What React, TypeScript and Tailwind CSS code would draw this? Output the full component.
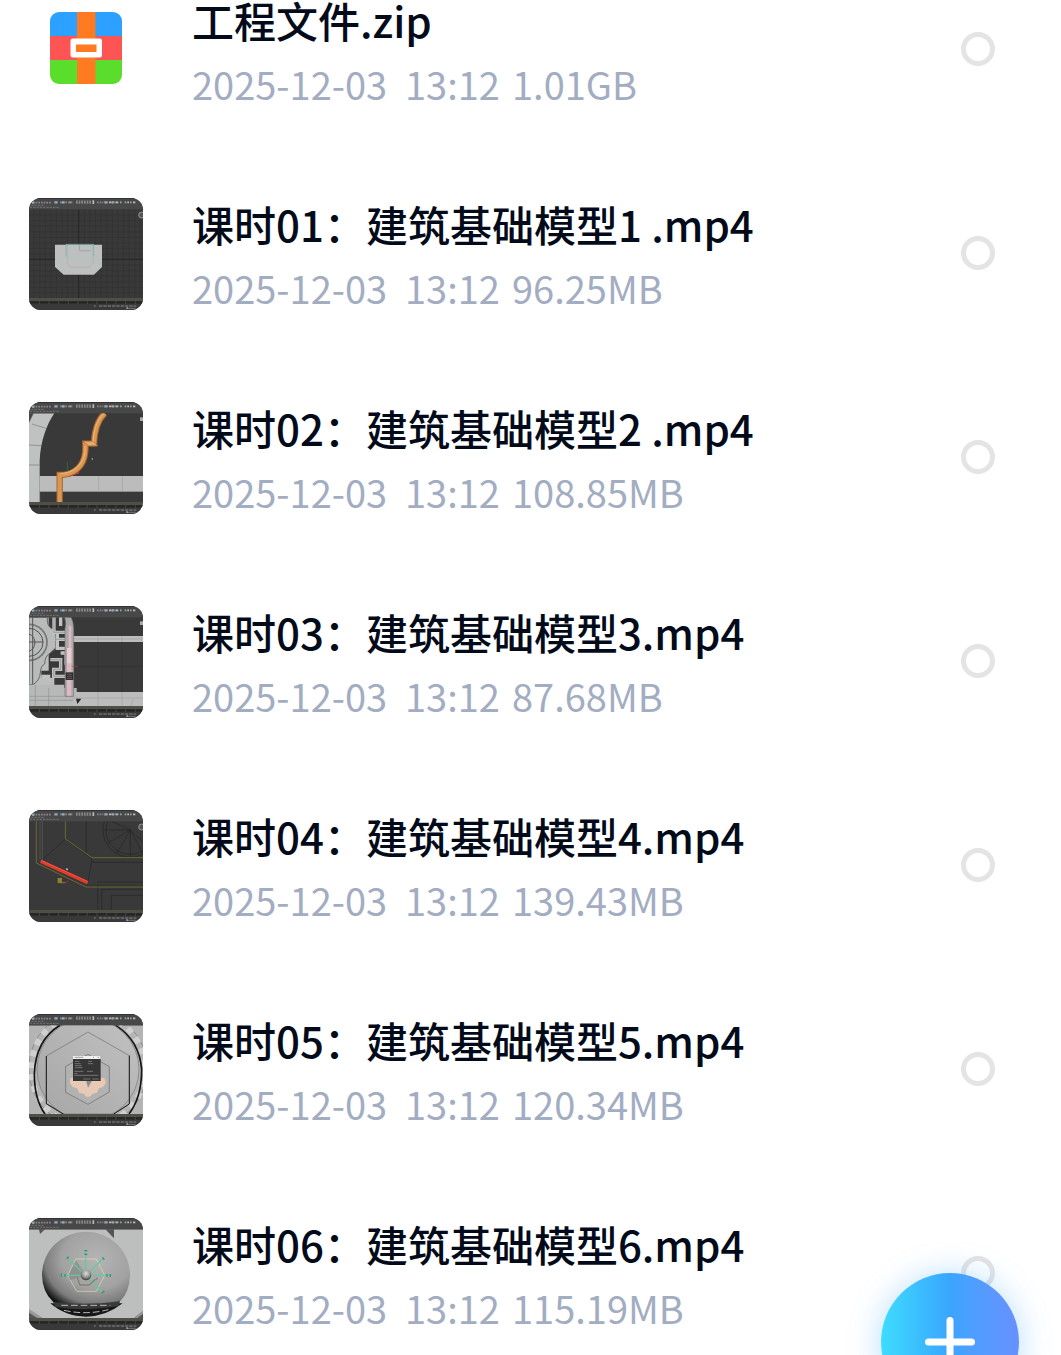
import React, { useState } from 'react';

type Scene = 'blockout' | 'trim' | 'lattice' | 'wireframe' | 'hexagon' | 'sphere';

interface FileItem {
  id: number;
  name: string;
  date: string;
  time: string;
  size: string;
  scene?: Scene;
}

const FILES: FileItem[] = [
  { id: 0, name: '工程文件.zip', date: '2025-12-03', time: '13:12', size: '1.01GB' },
  { id: 1, name: '课时01：建筑基础模型1 .mp4', date: '2025-12-03', time: '13:12', size: '96.25MB', scene: 'blockout' },
  { id: 2, name: '课时02：建筑基础模型2 .mp4', date: '2025-12-03', time: '13:12', size: '108.85MB', scene: 'trim' },
  { id: 3, name: '课时03：建筑基础模型3.mp4', date: '2025-12-03', time: '13:12', size: '87.68MB', scene: 'lattice' },
  { id: 4, name: '课时04：建筑基础模型4.mp4', date: '2025-12-03', time: '13:12', size: '139.43MB', scene: 'wireframe' },
  { id: 5, name: '课时05：建筑基础模型5.mp4', date: '2025-12-03', time: '13:12', size: '120.34MB', scene: 'hexagon' },
  { id: 6, name: '课时06：建筑基础模型6.mp4', date: '2025-12-03', time: '13:12', size: '115.19MB', scene: 'sphere' },
];

const ZipIcon = () => (
  <svg viewBox="0 0 72 72" className="size-18" aria-hidden="true">
    <defs>
      <clipPath id="zipClip"><rect width="72" height="72" rx="9" /></clipPath>
    </defs>
    <g clipPath="url(#zipClip)">
      <rect width="72" height="24" fill="#2ca1ff" />
      <rect y="24" width="72" height="24" fill="#ff5454" />
      <rect y="48" width="72" height="24" fill="#5bdd2b" />
      <rect x="27" width="18.5" height="72" fill="#ff7a20" />
    </g>
    <rect x="20.5" y="26.5" width="31.5" height="19" rx="2.5" fill="#fff" />
    <rect x="26" y="32.5" width="20.5" height="7.5" fill="#ff7a20" />
  </svg>
);

const Blockout = () => (
  <g>
    <path d="M27 75H369M27 92H369M27 108H369M27 125H369M27 142H369M27 158H369M27 175H369M27 192H369M27 225H369M27 242H369M27 258H369M27 275H369M27 292H369M27 308H369" stroke="#313131" strokeWidth="1.5" />
    <path d="M42 58V324M59 58V324M76 58V324M93 58V324M109 58V324M126 58V324M142 58V324M159 58V324M193 58V324M210 58V324M226 58V324M243 58V324M260 58V324M277 58V324M293 58V324M310 58V324M327 58V324M344 58V324M360 58V324" stroke="#313131" strokeWidth="1.5" />
    <path d="M27 208H369M176 58V324" stroke="#222" strokeWidth="2.5" />
    <path d="M105 164H246V231L222 254H131L105 231Z" fill="#bebfbf" />
    <path d="M142 164V220L154 232H208L219 220V164" fill="none" stroke="#aaadad" strokeWidth="2" />
    <path d="M142 201H219" stroke="#a9c7c5" strokeWidth="2" />
    <path d="M138 200V163H221V198" fill="none" stroke="#79b5b4" strokeWidth="2.5" />
    <path d="M178 163V182H212" fill="none" stroke="#8d9898" strokeWidth="2" />
    <circle cx="365" cy="75" r="9" fill="#555" stroke="#bbb" strokeWidth="2" />
  </g>
);

const Trim = () => (
  <g>
    <path d="M27 58H103C80 92 62 140 59 200V324H27Z" fill="#c0c1c1" />
    <path d="M27 58H41L27 86Z" fill="#444" />
    <path d="M40 58L28 83M36 90L78 103M27 153L64 155M27 213H59" stroke="#737373" strokeWidth="1.8" fill="none" />
    <rect x="59" y="246" width="310" height="47" fill="#bcbcbc" />
    <path d="M59 293V324M236 246V293M307 246V293" stroke="#999" strokeWidth="1.5" />
    <path d="M254 58Q224 88 222 149H196Q200 207 164 231Q147 243 119 243V324" fill="none" stroke="#a9672e" strokeWidth="19" />
    <path d="M254 58Q224 88 222 149H196Q200 207 164 231Q147 243 119 243V324" fill="none" stroke="#d99752" strokeWidth="13" />
    <path d="M251 58Q221 88 219 147M195 157Q198 202 162 227Q146 238 122 239" fill="none" stroke="#e8b074" strokeWidth="4" />
    <path d="M188 142L206 155H233L218 142Z" fill="#e7ad70" stroke="#9c5e2b" strokeWidth="1.5" />
    <path d="M142 204V230" stroke="#327b35" strokeWidth="2" />
    <path d="M150 246L178 236" stroke="#c5482e" strokeWidth="3" />
    <circle cx="217" cy="195" r="2" fill="#ccc" />
    <rect x="360" y="70" width="9" height="11" fill="#aaa" />
  </g>
);

const Lattice = () => (
  <g>
    <rect x="27" y="58" width="120" height="266" fill="#bcbdbd" />
    <path d="M86 58H138V324H103V240H64V218H86Z" fill="#393939" />
    <path d="M27 58H82Q80 82 93 91L107 96V150L86 169Q75 176 74 198Q62 203 61 225Q59 248 39 260H27Z" fill="#b9baba" stroke="#686868" strokeWidth="3" />
    <path d="M27 79A54 54 0 0 1 27 187" fill="none" stroke="#777" strokeWidth="5" />
    <path d="M27 91A42 42 0 0 1 27 175" fill="none" stroke="#515151" strokeWidth="3" />
    <path d="M27 108A28 28 0 0 1 27 160M27 132H70M38 58V260" fill="none" stroke="#555" strokeWidth="3" />
    <path d="M102 58V103H136M122 58V84M106 124H138M112 102V151H138M91 185H122V214H101V235H138M64 235H86V249M122 165H138V200" fill="none" stroke="#c1c2c2" strokeWidth="10" />
    <path d="M102 58V103H136M106 124H138M91 185H122V214H101V235H138" fill="none" stroke="#777" strokeWidth="1.5" />
    <path d="M27 260H133V270H170V324H27Z" fill="#b7b8b8" />
    <path d="M27 295H165M46 260V324M86 270V324M27 307H160" stroke="#929292" strokeWidth="2" />
    <rect x="159" y="114" width="210" height="18" fill="#bdbdbd" />
    <rect x="159" y="282" width="210" height="42" fill="#bcbcbc" />
    <path d="M159 123H369M234 114V132M306 114V132M234 282V324M306 282V324M159 300H369M340 304L332 324" stroke="#999" strokeWidth="1.5" />
    <path d="M234 132V282M306 132V282M161 205H367" stroke="#303030" strokeWidth="2" />
    <path d="M134 58H153Q160 70 161 93V295H135V93Q140 76 134 58Z" fill="#aaa9a9" stroke="#777" strokeWidth="2" />
    <path d="M146 83H154V293H141V150H146Z" fill="#e0b9c0" />
    <path d="M141 150H154V196H141Z" fill="#edccd1" />
    <rect x="137" y="223" width="23" height="23" fill="#302d2e" />
    <path d="M141 229H156M141 235H156M141 241H156" stroke="#836d70" strokeWidth="2" />
    <path d="M155 205H174" stroke="#a94543" strokeWidth="2" />
    <path d="M168 302H184L172 318Z" fill="#262626" />
    <rect x="360" y="70" width="9" height="11" fill="#aaa" />
  </g>
);

const Wireframe = () => (
  <g>
    <g fill="none" stroke="#262626" strokeWidth="2">
      <circle cx="331" cy="84" r="82" />
      <circle cx="331" cy="84" r="73" />
      <path d="M331 84L249 84M331 84L260 125M331 84L290 155M331 84V166M331 84L369 156M331 84L369 119M331 84L276 58" />
      <path d="M136 112L67 174M136 112L216 171L204 240M199 58V154M216 181H369M232 240H369M233 324V248M245 324V262H369M274 324V280H369M200 252H369" />
    </g>
    <path d="M49 58V183L198 255H369" fill="none" stroke="#77752f" strokeWidth="2.5" />
    <path d="M136 58V111L216 167H369" fill="none" stroke="#77752f" strokeWidth="2.5" />
    <path d="M60 58V173M67 58V174" stroke="#696969" strokeWidth="1.5" />
    <path d="M62 178L203 242" stroke="#e43a2c" strokeWidth="10" />
    <path d="M63 175L203 238" stroke="#ff5d46" strokeWidth="2" />
    <rect x="113" y="228" width="13" height="13" fill="#8d812f" />
    <path d="M113 242H135" stroke="#aaa33c" strokeWidth="2" />
    <path d="M130 242Q143 243 145 237" fill="none" stroke="#b34336" strokeWidth="2" />
    <circle cx="141" cy="202" r="3" fill="#b9c2ca" />
    <circle cx="365" cy="75" r="9" fill="#555" stroke="#bbb" strokeWidth="2" />
  </g>
);

const Hexagon = () => (
  <g>
    <rect x="27" y="58" width="342" height="266" fill="#b4b4b4" />
    <circle cx="204" cy="188" r="178" fill="none" stroke="#8e8e8e" strokeWidth="3" />
    <circle cx="204" cy="190" r="171" fill="none" stroke="#d0d0d0" strokeWidth="18" strokeDasharray="18 18" />
    <path d="M120 58Q47 103 43 203Q43 280 75 324M287 58Q358 103 365 190Q365 275 327 324" fill="none" stroke="#151515" strokeWidth="5" />
    <circle cx="204" cy="190" r="153" fill="url(#discShade)" stroke="#777" strokeWidth="2" />
    <path d="M204 78L328 149V294L282 324H128L79 293V150Z" fill="none" stroke="#707070" strokeWidth="2" />
    <path d="M79 150V293L130 324M328 149V294L281 324" fill="none" stroke="#1c1c1c" strokeWidth="3" />
    <path d="M204 145L268 182V258L204 295L137 259V181Z" fill="#b2b2b2" stroke="#777" strokeWidth="2.5" />
    <path d="M151 216H253L258 229L249 243L237 247L231 260L218 263L210 272H199L191 263L177 260L172 247L158 243L150 232Z" fill="#e8c9b5" />
    <path d="M198 222L204 245L216 224Z" fill="#8d8d8d" />
    <rect x="159" y="150" width="83" height="75" fill="#363636" />
    <rect x="159" y="150" width="83" height="9" fill="#f0f0f0" />
    <path d="M164 154H190M219 154H222M233 154H237" stroke="#777" strokeWidth="2" />
    <path d="M165 166H178M165 173H182M165 179H185M165 185H187M204 166H216M204 173H219M163 196H190M201 196H219M163 203H173M163 208H235M190 219H211M217 219H236" stroke="#929292" strokeWidth="2" />
  </g>
);

const Sphere = () => (
  <g>
    <rect x="27" y="58" width="342" height="266" fill="#bdbebe" />
    <path d="M57 58H75L60 72ZM256 58H282V85ZM27 304L66 324H27ZM342 324L369 303V324Z" fill="#555" />
    <path d="M27 297L69 324H52L27 308ZM369 302L344 324H352L369 311Z" fill="#999" />
    <path d="M91 280Q137 320 198 320Q257 320 308 280Z" fill="#171717" />
    <path d="M66 194A132 129 0 0 1 330 194Q329 247 300 274Q290 291 267 287Q202 299 134 287Q111 292 99 275Q67 246 66 194Z" fill="url(#ballShade)" />
    <path d="M101 276Q194 288 300 274L296 288Q197 306 105 290Z" fill="#3a3a3a" />
    <path d="M124 286H271M132 301Q198 316 265 299" fill="none" stroke="#bbb" strokeWidth="3" strokeDasharray="20 9" />
    <path d="M168 147H229L254 196L229 244H170L143 196Z" fill="none" stroke="#e1ddb2" strokeWidth="2" />
    <path d="M168 150L197 196L150 211L145 196Z" fill="#777" opacity=".45" />
    <path d="M197 196V124M197 196L143 145M197 196L250 145M197 196H125M197 196H271M197 196L250 249" stroke="#62c9a0" strokeWidth="4" />
    <path d="M193 122H202M193 133H202M140 146L146 140M247 142L253 149M124 191V200M135 192V200M261 192V200M271 192V201M245 250L253 243" stroke="#398f70" strokeWidth="4" />
    <path d="M171 200L180 225H207L227 208" fill="none" stroke="#858273" strokeWidth="4" />
    <circle cx="198" cy="195" r="16" fill="url(#knobShade)" />
    <path d="M231 203V209" stroke="#555" strokeWidth="2" />
  </g>
);

const SCENES: Record<Scene, () => React.JSX.Element> = {
  blockout: Blockout,
  trim: Trim,
  lattice: Lattice,
  wireframe: Wireframe,
  hexagon: Hexagon,
  sphere: Sphere,
};

const Thumbnail = ({ scene }: { scene: Scene }) => {
  const Drawing = SCENES[scene];
  return (
    <svg viewBox="27 24 342 336" preserveAspectRatio="none" className="h-28 w-[114px] rounded-xl" aria-hidden="true">
      <defs>
        <linearGradient id="discShade" x1="0" y1="1" x2="1" y2="0">
          <stop stopColor="#a5a5a5" />
          <stop offset="1" stopColor="#c2c2c2" />
        </linearGradient>
        <radialGradient id="ballShade" cx=".62" cy=".36" r=".72">
          <stop stopColor="#b4b4b4" />
          <stop offset=".55" stopColor="#a2a2a2" />
          <stop offset=".82" stopColor="#7c7c7c" />
          <stop offset="1" stopColor="#151515" />
        </radialGradient>
        <radialGradient id="knobShade" cx=".5" cy=".35" r=".6">
          <stop stopColor="#ddd" />
          <stop offset=".6" stopColor="#989898" />
          <stop offset="1" stopColor="#484848" />
        </radialGradient>
      </defs>
      <rect x="27" y="24" width="342" height="336" fill="#393939" />
      <Drawing />
      {/* toolbar of the 3D editor */}
      <rect x="27" y="24" width="342" height="34" fill="#484848" />
      <path d="M27 25H369" stroke="#303030" strokeWidth="3" />
      <path d="M39 38H92M120 37H158M168 34H216M168 39H216M231 37H250" stroke="#888" strokeWidth="5" strokeDasharray="5 3" />
      <path d="M36 38H43M103 37H113M125 37H134M253 37H263M276 37H283" stroke="#91a9c3" strokeWidth="7" />
      <path d="M148 37H153M300 37H305M314 37H319M330 37H335" stroke="#8eaaa3" strokeWidth="5" />
      <path d="M220 31V42M267 37H275M286 37H295M322 37H327M339 37H346" stroke="#bbb" strokeWidth="5" />
      <path d="M34 46H73M29 52H117" stroke="#858585" strokeWidth="2" strokeDasharray="7 3" />
      {/* timeline and status bar */}
      <rect x="27" y="324" width="342" height="9" fill="#504f46" />
      <rect x="27" y="333" width="342" height="27" fill="#393939" />
      <path d="M27 337H369" stroke="#242424" strokeWidth="7" />
      <path d="M58 333V342M87 333V342M116 333V342M145 333V342M174 333V342M202 333V342M231 333V342M260 333V342M288 333V342M317 333V342M346 333V342" stroke="#555" strokeWidth="2" />
      <path d="M222 348H227M237 348H349" stroke="#888" strokeWidth="3" strokeDasharray="10 3" />
      <path d="M320 355H347" stroke="#777" strokeWidth="3" />
      <rect x="319" y="352" width="5" height="5" fill="#7fa4c4" />
    </svg>
  );
};

interface FileRowProps {
  file: FileItem;
  checked: boolean;
  onToggle: (id: number) => void;
}

const FileRow = ({ file, checked, onToggle }: FileRowProps) => (
  <li className="flex items-start">
    <div className="flex w-[114px] shrink-0 justify-center">
      {file.scene ? <Thumbnail scene={file.scene} /> : <div className="pt-[18px]"><ZipIcon /></div>}
    </div>
    <label htmlFor={`file-${file.id}`} className="ml-[49px] flex h-28 min-w-0 flex-1 flex-col gap-5 pt-1">
      <span className="text-[42px] leading-11 font-medium whitespace-nowrap text-[#030b1a]">{file.name}</span>
      <span className="flex text-[38px] leading-11 font-normal whitespace-nowrap text-[#a3adc2]">
        <span className="w-[213px]">{file.date}</span>
        <span className="w-[107px]">{file.time}</span>
        <span>{file.size}</span>
      </span>
    </label>
    <div className="flex h-[110px] items-center">
      <input
        id={`file-${file.id}`}
        type="checkbox"
        checked={checked}
        onChange={() => onToggle(file.id)}
        className="size-[34px] appearance-none rounded-full border-5 border-[#e4e4e4] checked:border-[#3aa0ff] checked:bg-[#3aa0ff]"
      />
    </div>
  </li>
);

const App = () => {
  const [selected, setSelected] = useState<number[]>([]);

  const toggle = (id: number) => {
    setSelected(prev => (prev.includes(id) ? prev.filter(x => x !== id) : [...prev, id]));
  };

  return (
    <main className="min-h-screen overflow-hidden bg-white font-['Noto_Sans_CJK_SC',sans-serif]" lang="zh-CN">
      <ul className="-mt-1.5 flex flex-col gap-[92px] pr-[66px] pl-[29px]">
        {FILES.map(file => (
          <FileRow key={file.id} file={file} checked={selected.includes(file.id)} onToggle={toggle} />
        ))}
      </ul>

      <button
        type="button"
        aria-label="添加"
        className="fixed right-[42px] -bottom-14 flex size-[138px] items-center justify-center rounded-full bg-linear-to-r from-[#3fdcff] via-[#3aa5ff] to-[#6790ff] shadow-[0_2px_32px_rgba(58,165,255,0.38)]"
      >
        <svg viewBox="0 0 50 50" className="size-[50px]" fill="none" stroke="#fff" strokeWidth="7" strokeLinecap="round" aria-hidden="true">
          <path d="M25 3.5V46.5M3.5 25H46.5" />
        </svg>
      </button>
    </main>
  );
};

export default App;
